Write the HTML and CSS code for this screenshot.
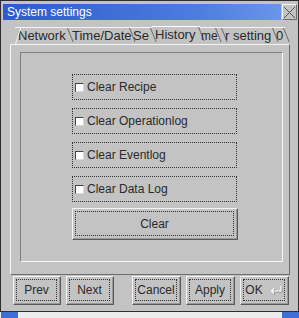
FILE: index.html
```html
<!DOCTYPE html>
<html lang="en">
  <head>
    <meta charset="UTF-8" />
    <title>System settings</title>
    <link rel="stylesheet" href="styles.css">
  </head>
  <body>
    <div class="window">
      <div class="titlebar">
        <span class="title">System settings</span>
        <span class="close">
          <svg width="13" height="11" viewBox="0 0 13 11">
            <path d="M1 0 L12 11 M12 0 L1 11" stroke="#555" stroke-width="1" fill="none" />
          </svg>
        </span>
      </div>

      <div class="tabs">
        <span class="tab w54">Network</span>
        <span class="tab w62">Time/Date</span>
        <span class="tab w21">Se</span>
        <span class="tab w48 active">History</span>
        <span class="tab w17">me</span>
        <span class="tab w6"></span>
        <span class="tab w51">r setting</span>
        <span class="tab w11">0</span>
      </div>

      <div class="panel">
        <div class="frame">
          <label class="check-row"><span class="box"></span>Clear Recipe</label>
          <label class="check-row"><span class="box"></span>Clear Operationlog</label>
          <label class="check-row"><span class="box"></span>Clear Eventlog</label>
          <label class="check-row"><span class="box"></span>Clear Data Log</label>
          <button class="btn btn-clear"><span class="focus">Clear</span></button>
        </div>
      </div>

      <div class="actions">
        <div class="group">
          <button class="btn"><span class="focus">Prev</span></button>
          <button class="btn"><span class="focus">Next</span></button>
        </div>
        <div class="group">
          <button class="btn"><span class="focus">Cancel</span></button>
          <button class="btn"><span class="focus">Apply</span></button>
          <button class="btn">
            <span class="focus">OK
              <svg class="enter" width="14" height="10" viewBox="0 0 14 10">
                <path d="M12 1 V6 H3 M5 3.5 L2.5 6 L5 8.5" stroke="#8a8a8a" stroke-width="1.2" fill="none" transform="translate(1 1)" />
                <path d="M12 1 V6 H3 M5 3.5 L2.5 6 L5 8.5" stroke="#fff" stroke-width="1.2" fill="none" />
              </svg>
            </span>
          </button>
        </div>
      </div>
    </div>

    <div class="taskbar">
      <span class="blip"></span>
      <span class="blip right"></span>
    </div>
  </body>
</html>
```

FILE: styles.css
```css
/* old Qt style dialog */
body {
  margin: 0;
  background-color: #ececec;
  font-family: "Liberation Sans", Arial, sans-serif;
  font-size: 12px;
  color: #2a2a2a;
}
.window {
  width: 299px;
  height: 312px;
  box-sizing: border-box;
  border: 1px solid #2e2e2e;
  padding: 3px 1px 0 2px;
  background-color: #c3c3c3;
  display: flex;
  flex-direction: column;
}
.titlebar {
  display: flex;
  height: 16px;
}
.title {
  flex: 1;
  background: linear-gradient(90deg, #2d5bcc, #4c7ddf 70%, #6a95ea);
  color: #ffffff;
  font-size: 12px;
  line-height: 16px;
  padding-left: 4px;
}
.close {
  width: 13px;
  height: 14px;
  margin-left: 1px;
  border: 1px solid;
  border-color: #f4f4f4 #6e6e6e #6e6e6e #f4f4f4;
  display: flex;
  align-items: center;
  justify-content: center;
}
.close svg {
  display: block;
}

/* tab row */
.tabs {
  display: flex;
  margin: 7px 0 0 12px;
  height: 17px;
  font-size: 13px;
}
.tab {
  position: relative;
  box-sizing: border-box;
  border-top: 1px solid #f4f4f4;
  padding: 0 0 0 3px;
  line-height: 16px;
  white-space: nowrap;
}
.tab::after {
  content: "";
  position: absolute;
  right: 1px;
  top: 0;
  height: 14px;
  border-right: 1px solid #6a6a6a;
  transform: skewX(22deg);
  transform-origin: top;
}
.tab:first-child::before {
  content: "";
  position: absolute;
  left: 0;
  top: 0;
  height: 16px;
  border-left: 1px solid #f4f4f4;
  transform: skewX(-18deg);
  transform-origin: bottom;
}
.tab.active {
  margin-top: -1px;
  border-top-color: #ffffff;
}
.tab.w54 { width: 54px; }
.tab.w62 { width: 62px; }
.tab.w21 { width: 21px; padding-left: 2px; }
.tab.w48 { width: 48px; }
.tab.w17 { width: 17px; padding-left: 1px; font-size: 12px; }
.tab.w6 { width: 6px; }
.tab.w51 { width: 51px; padding-left: 2px; }
.tab.w11 { width: 11px; padding-left: 2px; }

/* tab panel */
.panel {
  margin: 0 7px 0 7px;
  height: 231px;
  box-sizing: border-box;
  border: 1px solid;
  border-color: #f4f4f4 #6e6e6e #6e6e6e #f4f4f4;
  padding: 7px 6px 12px 9px;
}
.frame {
  height: 100%;
  box-sizing: border-box;
  border: 1px solid;
  border-color: #808080 #f4f4f4 #f4f4f4 #808080;
  padding: 21px 0 0 51px;
  display: flex;
  flex-direction: column;
  gap: 8px;
}
.check-row {
  width: 165px;
  height: 26px;
  box-sizing: border-box;
  border: 1px dotted #333333;
  display: flex;
  align-items: center;
  padding-left: 2px;
  gap: 3px;
}
.box {
  width: 9px;
  height: 9px;
  box-sizing: border-box;
  background-color: #ffffff;
  border: 1px solid;
  border-color: #444444 #d8d8d8 #d8d8d8 #444444;
}

/* buttons */
.btn {
  font: inherit;
  color: inherit;
  background-color: #c3c3c3;
  border: 1px solid;
  border-color: #f4f4f4 #5a5a5a #5a5a5a #f4f4f4;
  box-shadow: inset -1px -1px 0 #9a9a9a;
  padding: 2px 3px 3px 2px;
  display: flex;
  width: 48px;
  height: 29px;
  box-sizing: border-box;
}
.btn .focus {
  flex: 1;
  border: 1px dotted #333333;
  display: flex;
  align-items: center;
  justify-content: center;
  gap: 6px;
}
.btn-clear {
  width: 166px;
  height: 32px;
  margin-top: -2px;
}
.actions {
  display: flex;
  gap: 18px;
  margin: 1px 0 0 10px;
}
.group {
  display: flex;
  gap: 5px;
}
.group + .group .btn {
  width: 49px;
}
.enter {
  display: block;
}

.taskbar {
  display: flex;
  justify-content: space-between;
  height: 6px;
}
.blip {
  width: 17px;
  margin-left: 1px;
  background-color: #3d6fd6;
}
.blip.right {
  margin: 0;
}
```
